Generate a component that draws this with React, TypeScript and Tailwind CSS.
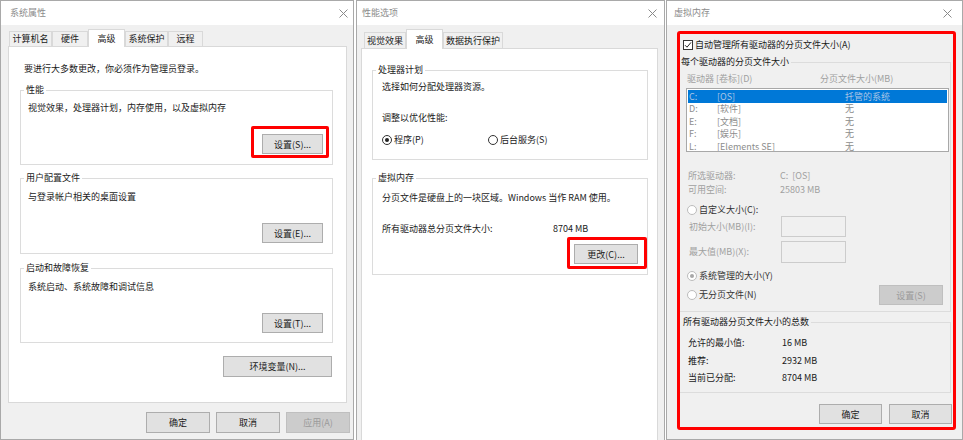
import React from "react";

const CloseX = () => (
  <svg width="9" height="9" viewBox="0 0 9 9" className="shrink-0">
    <path d="M0.5 0.5L8.5 8.5M8.5 0.5L0.5 8.5" stroke="#8a8a8a" strokeWidth="1" fill="none" />
  </svg>
);

const Btn = ({
  label,
  className = "",
  disabled = false,
}: {
  label: React.ReactNode;
  className?: string;
  disabled?: boolean;
}) => (
  <div
    className={`flex shrink-0 items-center justify-center border leading-none ${
      disabled
        ? "border-[#bfbfbf] bg-[#cccccc] text-[#9a9a9a]"
        : "border-[#adadad] bg-[#e1e1e1] text-[#1a1a1a]"
    } ${className}`}
  >
    {label}
  </div>
);

const Radio = ({ checked = false, disabled = false }: { checked?: boolean; disabled?: boolean }) => (
  <span
    className={`flex h-[10px] w-[10px] shrink-0 items-center justify-center rounded-full border bg-white ${
      disabled ? "border-[#bcbcbc]" : "border-[#333]"
    }`}
  >
    {checked && (
      <span className={`h-[4px] w-[4px] rounded-full ${disabled ? "bg-[#a8a8a8]" : "bg-[#222]"}`} />
    )}
  </span>
);

const Tab = ({ label, className, active = false }: { label: string; className: string; active?: boolean }) => (
  <div
    className={`flex shrink-0 items-center justify-center border border-b-0 border-[#d9d9d9] ${
      active ? "relative z-10 -mb-px bg-white" : "bg-[#f0f0f0]"
    } ${className}`}
  >
    {label}
  </div>
);

const drives = [
  { d: "C:", l: "[OS]", s: "托管的系统", sel: true },
  { d: "D:", l: "[软件]", s: "无" },
  { d: "E:", l: "[文档]", s: "无" },
  { d: "F:", l: "[娱乐]", s: "无" },
  { d: "L:", l: "[Elements SE]", s: "无" },
];

export default function App() {
  return (
    <div className="flex h-[440px] w-[963px] overflow-hidden bg-white font-['Noto_Sans_CJK_SC',sans-serif] text-[9px] leading-[12px] text-[#1a1a1a]">
      {/* 系统属性 */}
      <div className="flex h-[440px] w-[354px] shrink-0 flex-col border border-[#a9a9a9] bg-[#f0f0f0]">
        <div className="flex h-[24px] items-center justify-between bg-white pl-[9px] pr-[5px] text-[#8c8c8c]">
          <span>系统属性</span>
          <CloseX />
        </div>
        <div className="ml-[8px] mt-[4px] flex h-[17px] items-end">
          <Tab label="计算机名" className="h-[15px] w-[43px]" />
          <Tab label="硬件" className="h-[15px] w-[36px]" />
          <Tab label="高级" className="h-[18px] w-[37px]" active />
          <Tab label="系统保护" className="h-[15px] w-[43px]" />
          <Tab label="远程" className="h-[15px] w-[35px]" />
        </div>
        <div className="ml-[7px] flex h-[357px] w-[339px] flex-col border border-[#d9d9d9] bg-white">
          <p className="ml-[15px] mt-[16px]">要进行大多数更改，你必须作为管理员登录。</p>

          <fieldset className="ml-[11px] mt-[9px] w-[313px] border border-[#dcdcdc] pb-[6px]">
            <legend className="ml-[3px] px-[2px]">性能</legend>
            <p className="ml-[7px] mt-[6px]">视觉效果，处理器计划，内存使用，以及虚拟内存</p>
            <div className="ml-auto mr-[3px] mt-[12px] h-[32px] w-[78px] rounded-[2px] border-[3px] border-[#ff0000] pl-[8px] pt-[5px]">
              <Btn label="设置(S)..." className="h-[20px] w-[61px]" />
            </div>
          </fieldset>

          <fieldset className="ml-[11px] mt-[7px] w-[313px] border border-[#dcdcdc] pb-[10px]">
            <legend className="ml-[3px] px-[2px]">用户配置文件</legend>
            <p className="ml-[7px] mt-[7px]">与登录帐户相关的桌面设置</p>
            <Btn label="设置(E)..." className="ml-auto mr-[9px] mt-[20px] h-[20px] w-[61px]" />
          </fieldset>

          <fieldset className="ml-[11px] mt-[8px] w-[313px] border border-[#dcdcdc] pb-[9px]">
            <legend className="ml-[3px] px-[2px]">启动和故障恢复</legend>
            <p className="ml-[7px] mt-[7px]">系统启动、系统故障和调试信息</p>
            <Btn label="设置(T)..." className="ml-auto mr-[9px] mt-[20px] h-[20px] w-[61px]" />
          </fieldset>

          <Btn label="环境变量(N)..." className="ml-auto mr-[14px] mt-[13px] h-[21px] w-[109px]" />
        </div>
        <div className="mt-[9px] flex justify-end gap-[6px] pr-[3px]">
          <Btn label="确定" className="h-[21px] w-[64px]" />
          <Btn label="取消" className="h-[21px] w-[64px]" />
          <Btn label="应用(A)" className="h-[21px] w-[64px]" disabled />
        </div>
      </div>

      {/* 性能选项 */}
      <div className="ml-[2px] flex h-[445px] w-[309px] shrink-0 flex-col border border-[#a9a9a9] bg-[#f0f0f0]">
        <div className="flex h-[24px] items-center justify-between bg-white pl-[5px] pr-[7px] text-[#8c8c8c]">
          <span>性能选项</span>
          <CloseX />
        </div>
        <div className="ml-[7px] mt-[4px] flex h-[19px] items-end">
          <Tab label="视觉效果" className="h-[16px] w-[42px]" />
          <Tab label="高级" className="h-[20px] w-[37px]" active />
          <Tab label="数据执行保护" className="h-[16px] w-[60px]" />
        </div>
        <div className="ml-[4px] flex w-[297px] flex-1 flex-col border border-[#d9d9d9] bg-white">
          <fieldset className="ml-[10px] mt-[15px] w-[276px] border border-[#dcdcdc] pb-[13px]">
            <legend className="ml-[3px] px-[2px]">处理器计划</legend>
            <p className="ml-[9px] mt-[5px]">选择如何分配处理器资源。</p>
            <p className="ml-[9px] mt-[19px]">调整以优化性能:</p>
            <div className="ml-[9px] mt-[10px] flex items-center">
              <div className="flex w-[106px] items-center gap-[2px]">
                <Radio checked />
                <span>程序(P)</span>
              </div>
              <div className="flex items-center gap-[2px]">
                <Radio />
                <span>后台服务(S)</span>
              </div>
            </div>
          </fieldset>

          <fieldset className="ml-[10px] mt-[12px] w-[276px] border border-[#dcdcdc] pb-[5px]">
            <legend className="ml-[3px] px-[2px]">虚拟内存</legend>
            <p className="ml-[9px] mt-[8px]">分页文件是硬盘上的一块区域。Windows 当作 RAM 使用。</p>
            <div className="ml-[9px] mt-[19px] flex">
              <span className="w-[171px]">所有驱动器总分页文件大小:</span>
              <span>8704 MB</span>
            </div>
            <div className="ml-auto mt-[2px] h-[32px] w-[80px] rounded-[2px] border-[3px] border-[#ff0000] pl-[4px] pt-[4px]">
              <Btn label="更改(C)..." className="h-[20px] w-[64px]" />
            </div>
          </fieldset>
        </div>
      </div>

      {/* 虚拟内存 */}
      <div className="ml-[1px] flex h-[440px] w-[297px] shrink-0 flex-col border border-[#a9a9a9] bg-[#f0f0f0]">
        <div className="flex h-[24px] items-center justify-between bg-white pl-[7px] pr-[10px] text-[#8c8c8c]">
          <span>虚拟内存</span>
          <CloseX />
        </div>
        <div className="ml-[10px] mt-[6px] flex h-[399px] w-[279px] flex-col rounded-[3px] border-[3px] border-[#ff0000]">
          <div className="mt-[5px] flex items-center gap-[2px] pl-[3px]">
            <span className="flex h-[10px] w-[10px] shrink-0 items-center justify-center border border-[#333] bg-white">
              <svg width="8" height="8" viewBox="0 0 8 8">
                <path d="M1 4.2L3 6.2L7 1.4" fill="none" stroke="#222" strokeWidth="1" />
              </svg>
            </span>
            <span>自动管理所有驱动器的分页文件大小(A)</span>
          </div>

          <fieldset className="mr-[2px] mt-[5px] border border-l-0 border-[#dcdcdc] pb-[6px]">
            <legend className="pl-[1px] pr-[2px]">每个驱动器的分页文件大小</legend>
            <div className="mt-[5px] flex pl-[7px] text-[#a0a0a0]">
              <span className="w-[133px]">驱动器 [卷标](D)</span>
              <span>分页文件大小(MB)</span>
            </div>
            <div className="ml-[6px] mr-[1px] mt-[3px] h-[64px] overflow-hidden border border-[#a8a8a8] bg-white pt-px">
              {drives.map((r) => (
                <div
                  key={r.d}
                  className={`mx-px flex h-[12.5px] items-center pl-px leading-none ${
                    r.sel ? "bg-[#0078d7] text-[#a9c4e6]" : "text-[#8c8c8c]"
                  }`}
                >
                  <span className="w-[28px]">{r.d}</span>
                  <span className="w-[128px]">{r.l}</span>
                  <span>{r.s}</span>
                </div>
              ))}
            </div>
            <div className="mt-[18px] flex pl-[8px] text-[#a0a0a0]">
              <span className="w-[92px]">所选驱动器:</span>
              <span>C:&nbsp;&nbsp;[OS]</span>
            </div>
            <div className="mt-[2px] flex pl-[8px] text-[#a0a0a0]">
              <span className="w-[92px]">可用空间:</span>
              <span>25803 MB</span>
            </div>
            <div className="mt-[8px] flex items-center gap-[2px] pl-[7px]">
              <Radio disabled />
              <span className="text-[#333]">自定义大小(C):</span>
            </div>
            <div className="flex h-[21px] items-center pl-[9px]">
              <span className="w-[92px] text-[#a0a0a0]">初始大小(MB)(I):</span>
              <div className="h-[21px] w-[65px] border border-[#cccccc] bg-[#f0f0f0]" />
            </div>
            <div className="mt-[4px] flex h-[22px] items-center pl-[9px]">
              <span className="w-[92px] text-[#a0a0a0]">最大值(MB)(X):</span>
              <div className="h-[22px] w-[65px] border border-[#cccccc] bg-[#f0f0f0]" />
            </div>
            <div className="mt-[7px] flex items-center gap-[2px] pl-[7px]">
              <Radio checked disabled />
              <span className="text-[#333]">系统管理的大小(Y)</span>
            </div>
            <div className="mt-[3px] flex h-[20px] items-center gap-[2px] pl-[7px]">
              <Radio disabled />
              <span className="text-[#333]">无分页文件(N)</span>
              <Btn label="设置(S)" className="ml-auto mr-[7px] h-[20px] w-[64px]" disabled />
            </div>
          </fieldset>

          <fieldset className="mr-[2px] mt-[4px] border border-l-0 border-[#dcdcdc] pb-[8px]">
            <legend className="pl-[3px] pr-[2px]">所有驱动器分页文件大小的总数</legend>
            <div className="mt-[9px] flex pl-[8px]">
              <span className="w-[94px]">允许的最小值:</span>
              <span>16 MB</span>
            </div>
            <div className="mt-[6px] flex pl-[8px]">
              <span className="w-[94px]">推荐:</span>
              <span>2932 MB</span>
            </div>
            <div className="mt-[5px] flex pl-[8px]">
              <span className="w-[94px]">当前已分配:</span>
              <span>8704 MB</span>
            </div>
          </fieldset>

          <div className="mt-[11px] flex justify-end gap-[7px] pr-[1px]">
            <Btn label="确定" className="h-[20px] w-[63px]" />
            <Btn label="取消" className="h-[20px] w-[63px]" />
          </div>
        </div>
      </div>
    </div>
  );
}
